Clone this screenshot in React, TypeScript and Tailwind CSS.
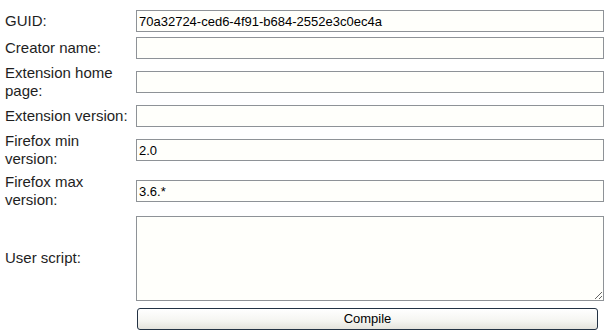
import React from "react";

type Field = {
  label: string;
  value?: string;
  tall?: boolean;
};

const FIELDS: Field[] = [
  { label: "GUID:", value: "70a32724-ced6-4f91-b684-2552e3c0ec4a" },
  { label: "Creator name:" },
  { label: "Extension home page:", tall: true },
  { label: "Extension version:" },
  { label: "Firefox min version:", value: "2.0", tall: true },
  { label: "Firefox max version:", value: "3.6.*", tall: true },
];

export default function App() {
  return (
    <div
      className="h-[336px] w-[610px] bg-white pl-[5px] pr-[6px] pt-[10px] text-[#1e1e1e]"
      style={{ fontFamily: '"Liberation Sans", Arial, sans-serif' }}
    >
      <div className="grid grid-cols-[131px_1fr] items-center gap-y-[5px]">
        {FIELDS.map((f) => (
          <React.Fragment key={f.label}>
            <label className={`pr-2 text-[15px] leading-[18px] ${f.tall ? "h-[36px]" : ""}`}>{f.label}</label>
            <input
              type="text"
              readOnly
              defaultValue={f.value ?? ""}
              className="h-[22px] w-full border border-[#8e9297] bg-[#fffffb] px-[2px] text-[13px] text-black outline-none"
            />
          </React.Fragment>
        ))}

        <label className="pr-2 text-[15px] leading-[18px]">User script:</label>
        <textarea
          readOnly
          className="mt-[2px] block h-[85px] w-full resize border border-[#8e9297] bg-[#fffffb] p-[2px] text-[13px] outline-none"
        />

        <div />
        <button
          type="button"
          className="mt-[2px] ml-px h-[22px] w-[461px] rounded-[3px] border border-[#233244] bg-[linear-gradient(180deg,#ffffff_0%,#f5f5f1_60%,#e4e3dc_100%)] text-[13px] text-black"
        >
          Compile
        </button>
      </div>
    </div>
  );
}
